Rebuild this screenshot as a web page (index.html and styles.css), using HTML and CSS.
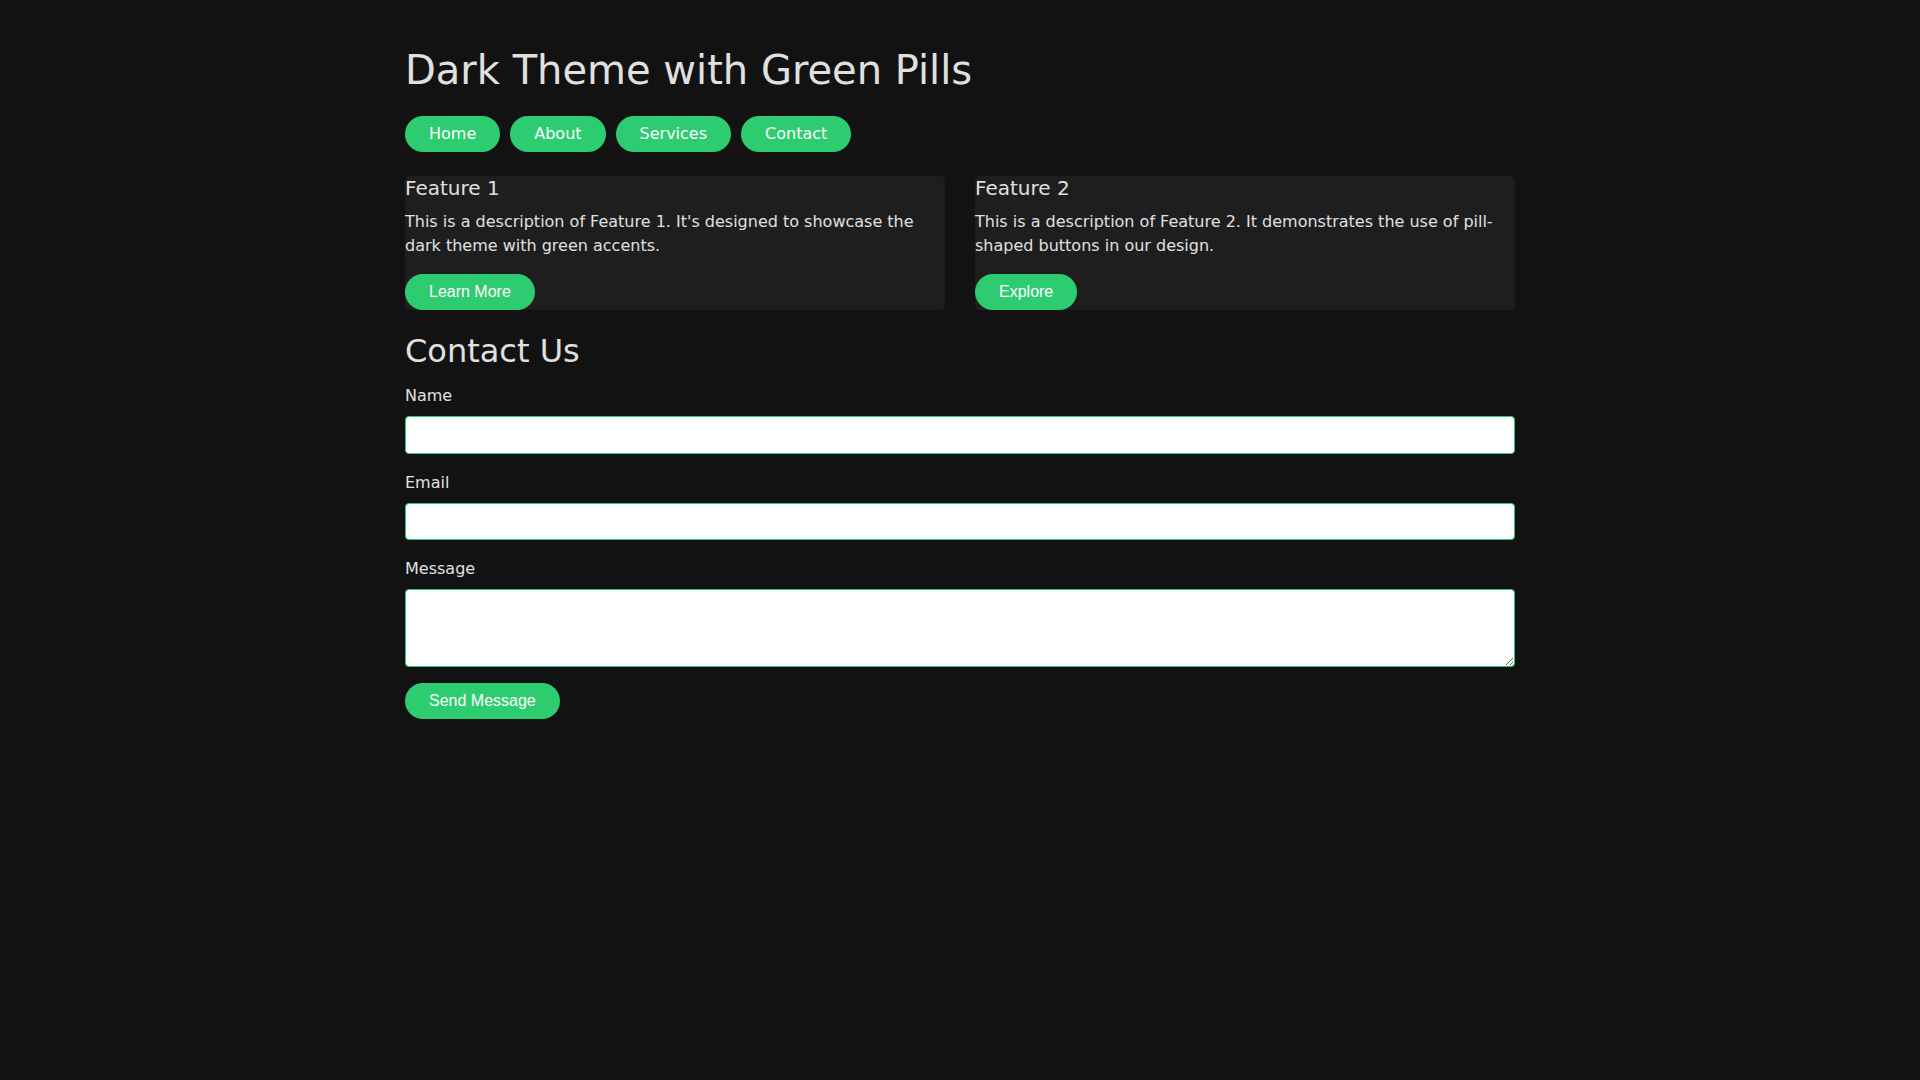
FILE: index.html
```html
<!DOCTYPE html>
<html>
<head>
  <title>Dark Theme with Green Pills</title>
  <link rel="stylesheet" href="styles.css">
</head>
<body>
  <div class="container">
    <h1>Dark Theme with Green Pills</h1>

    <nav class="nav">
      <a href="#" class="pill">Home</a>
      <a href="#" class="pill">About</a>
      <a href="#" class="pill">Services</a>
      <a href="#" class="pill">Contact</a>
    </nav>

    <div class="features">
      <div class="card">
        <h3>Feature 1</h3>
        <p>This is a description of Feature 1. It's designed to showcase the dark theme with green accents.</p>
        <button class="btn">Learn More</button>
      </div>
      <div class="card">
        <h3>Feature 2</h3>
        <p>This is a description of Feature 2. It demonstrates the use of pill-shaped buttons in our design.</p>
        <button class="btn">Explore</button>
      </div>
    </div>

    <h2>Contact Us</h2>
    <form class="contact-form" onsubmit="return false;">
      <div class="form-group">
        <label for="name">Name</label>
        <input type="text" id="name">
      </div>
      <div class="form-group">
        <label for="email">Email</label>
        <input type="email" id="email">
      </div>
      <div class="form-group">
        <label for="message">Message</label>
        <textarea id="message" rows="3"></textarea>
      </div>
      <button type="submit" class="btn">Send Message</button>
    </form>
  </div>
</body>
</html>
```

FILE: styles.css
```css
body {
  margin: 0;
  background-color: #121212;
  color: #e0e0e0;
  font-family: "DejaVu Sans", sans-serif;
  font-size: 16px;
}

.container {
  width: 1110px;
  margin: 0 auto;
  padding-top: 20px;
}

h1 {
  font-size: 40px;
  font-weight: normal;
  margin: 27px 0 23px;
}

.nav {
  display: flex;
  gap: 10px;
  margin-bottom: 24px;
}

.pill {
  display: inline-block;
  background-color: #2ecc71;
  color: #fff;
  text-decoration: none;
  padding: 8px 24px;
  line-height: 20px;
  border-radius: 18px;
}

.features {
  display: grid;
  grid-template-columns: 1fr 1fr;
  gap: 30px;
}

.card {
  background-color: #1e1e1e;
  border-radius: 5px;
}

.card h3 {
  font-size: 20px;
  font-weight: normal;
  margin: 0 0 10px;
}

.card p {
  line-height: 1.5;
  margin: 0 0 16px;
}

.btn {
  background-color: #2ecc71;
  color: #fff;
  border: none;
  border-radius: 18px;
  padding: 8px 24px;
  font-family: "Liberation Sans", Arial, sans-serif;
  font-size: 16px;
  line-height: 20px;
  cursor: pointer;
  display: block;
}

h2 {
  font-size: 32px;
  font-weight: normal;
  margin: 22px 0 16px;
}

.form-group {
  margin-bottom: 19px;
}

.form-group:last-of-type {
  margin-bottom: 16px;
}

.form-group label {
  display: block;
  margin-bottom: 11px;
}

.form-group input,
.form-group textarea {
  display: block;
  width: 100%;
  box-sizing: border-box;
  padding: 8px;
  border: 1px solid #2ecc71;
  border-radius: 4px;
  background-color: #fff;
  font-family: "DejaVu Sans", sans-serif;
  font-size: 16px;
  line-height: 19.5px;
}

.form-group textarea {
  height: 78px;
}
```
